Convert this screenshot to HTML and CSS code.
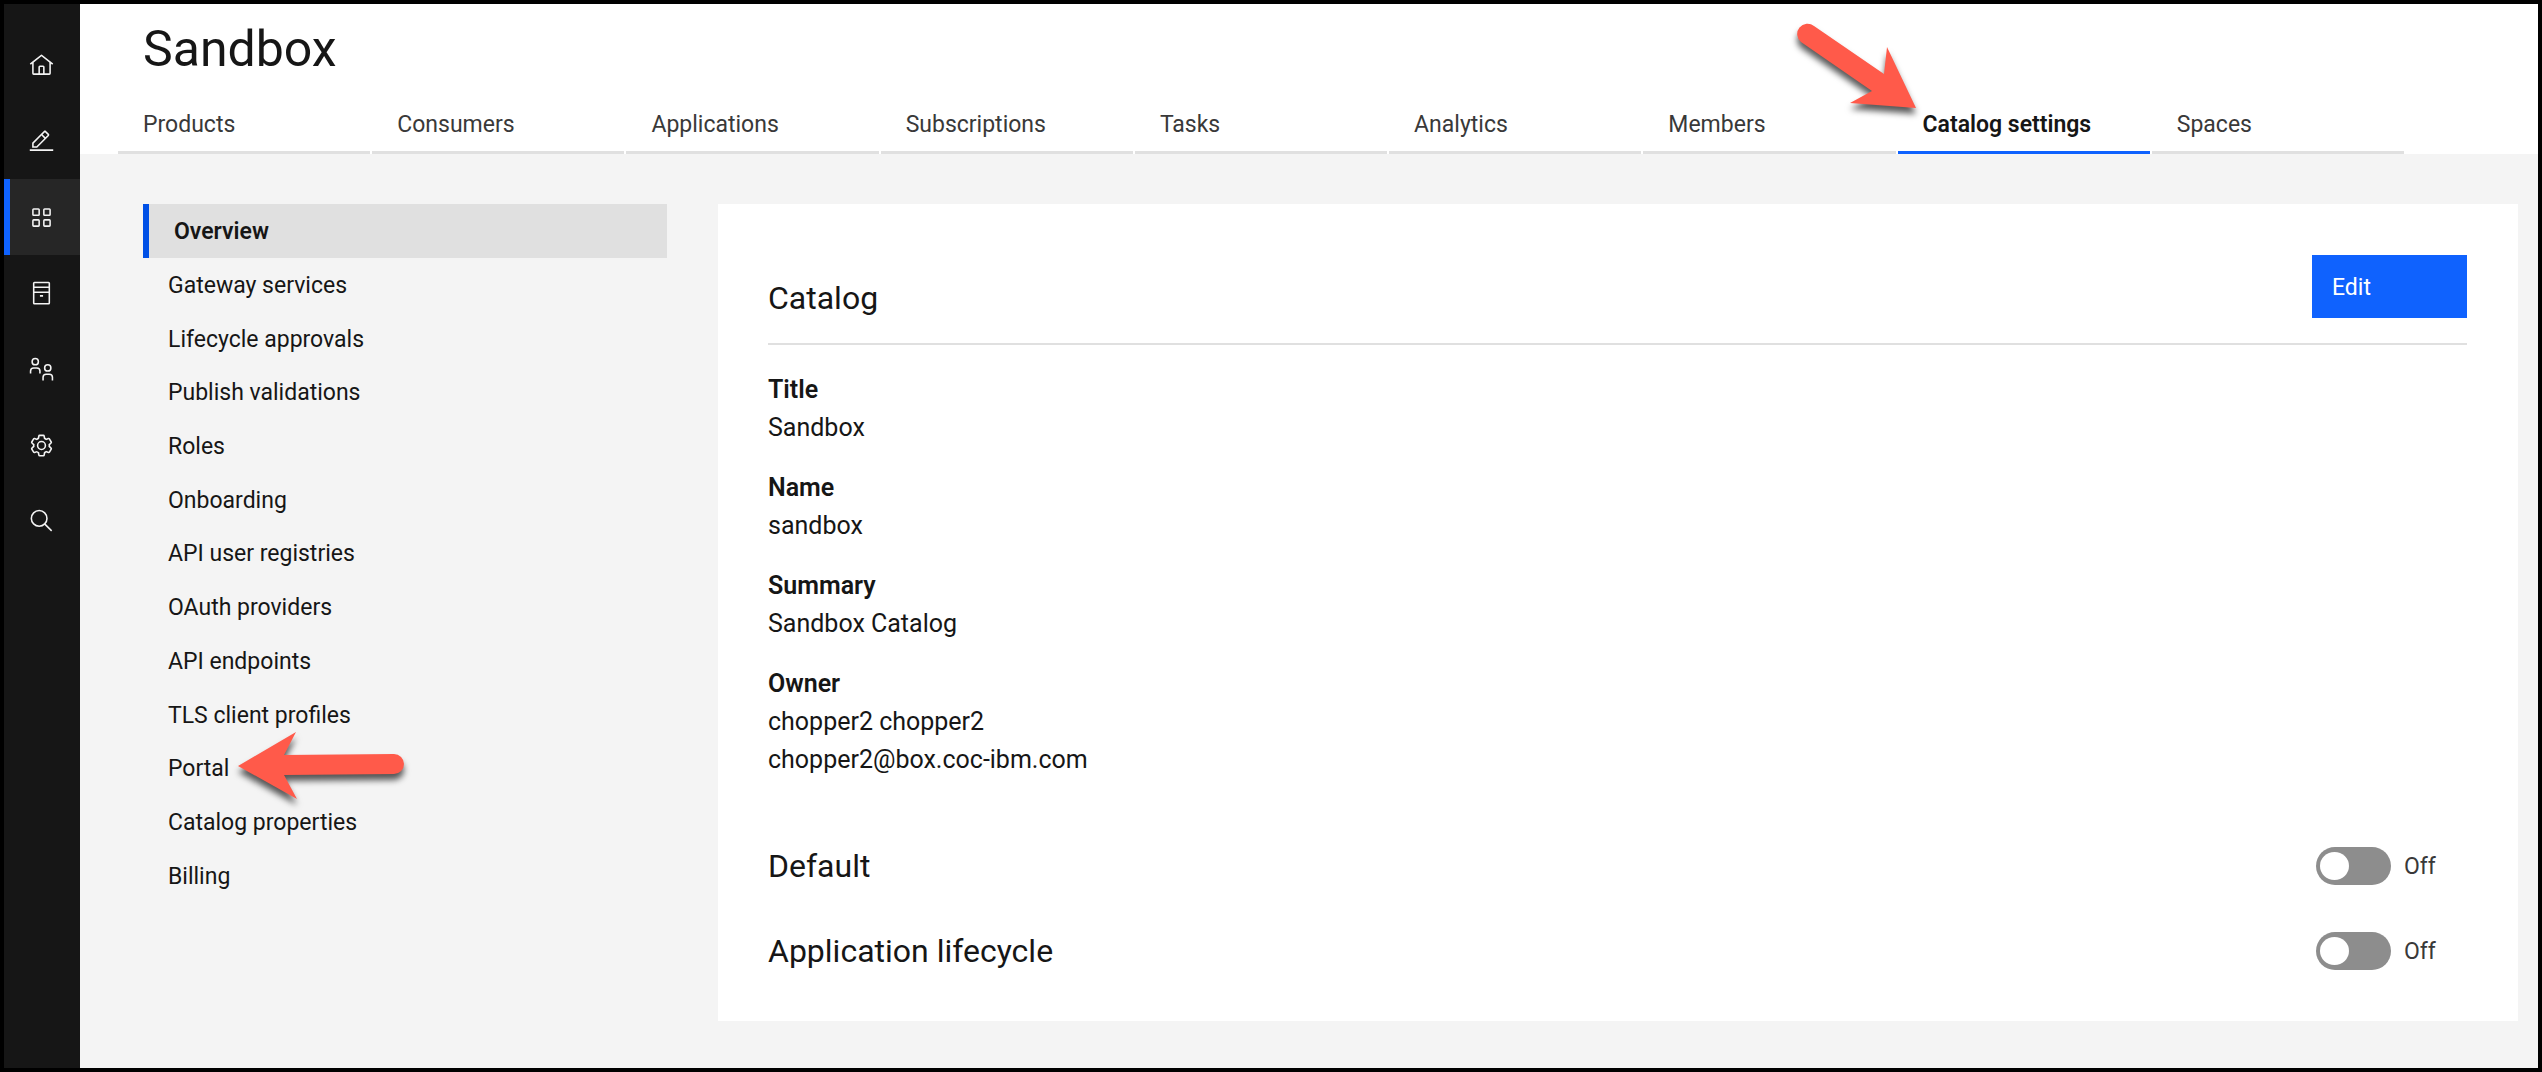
FILE: index.html
```html
<!DOCTYPE html>
<html lang="en">
<head>
<meta charset="utf-8">
<meta name="viewport" content="width=device-width, initial-scale=1">
<title>Sandbox</title>
<link rel="stylesheet" href="styles.css">
</head>
<body>
<div class="app">
  <nav class="rail" aria-label="Main">
    <a class="rail-link" href="#home" aria-label="Home">
      <svg class="icon" viewBox="0 0 32 32"><path d="M16.612 2.214a1.01 1.01 0 0 0-1.243 0L1 13.419l1.243 1.572L4 13.621V26a2 2 0 0 0 2 2h20a2 2 0 0 0 2-2V13.63L29.757 15 31 13.428zM18 26h-4v-8h4zm2 0v-8a2 2 0 0 0-2-2h-4a2 2 0 0 0-2 2v8H6V12.062l10-7.79 10 7.8V26z"/></svg>
    </a>
    <a class="rail-link" href="#develop" aria-label="Develop">
      <svg class="icon" viewBox="0 0 32 32"><path d="M1 26h30v2H1zM25.4 9c.8-.8.8-2 0-2.8l-3.6-3.6c-.8-.8-2-.8-2.8 0l-15 15V24h6.4zM20.4 4 24 7.6l-3 3L17.4 7zM6 22v-3.6l10-10 3.6 3.6-10 10z"/></svg>
    </a>
    <a class="rail-link rail-link-active" href="#manage" aria-label="Manage" aria-current="page">
      <svg class="icon" viewBox="0 0 32 32"><path d="M12 4H6a2 2 0 0 0-2 2v6a2 2 0 0 0 2 2h6a2 2 0 0 0 2-2V6a2 2 0 0 0-2-2zm0 8H6V6h6zM26 4h-6a2 2 0 0 0-2 2v6a2 2 0 0 0 2 2h6a2 2 0 0 0 2-2V6a2 2 0 0 0-2-2zm0 8h-6V6h6zM12 18H6a2 2 0 0 0-2 2v6a2 2 0 0 0 2 2h6a2 2 0 0 0 2-2v-6a2 2 0 0 0-2-2zm0 8H6v-6h6zM26 18h-6a2 2 0 0 0-2 2v6a2 2 0 0 0 2 2h6a2 2 0 0 0 2-2v-6a2 2 0 0 0-2-2zm0 8h-6v-6h6z"/></svg>
    </a>
    <a class="rail-link" href="#resources" aria-label="Resources">
      <svg class="icon icon-line" viewBox="0 0 32 32"><rect x="6" y="2" width="20" height="27" rx="1"/><path d="M6 8h20M6 14.500h20M14 19h4"/></svg>
    </a>
    <a class="rail-link" href="#members" aria-label="Members">
      <svg class="icon icon-line" viewBox="0 0 32 32"><circle cx="8" cy="6" r="4"/><path d="M2 21v-3a4 4 0 0 1 4-4h4a4 4 0 0 1 4 4v3"/><circle cx="24" cy="14" r="4"/><path d="M18 30v-4a4 4 0 0 1 4-4h4a4 4 0 0 1 4 4v4"/></svg>
    </a>
    <a class="rail-link" href="#settings" aria-label="Settings">
      <svg class="icon" viewBox="0 0 32 32"><path fill-rule="evenodd" d="M27 16.760c0-.25 0-.5 0-.76s0-.51 0-.77l1.920-1.680A2 2 0 0 0 29.300 11L26.940 7a2 2 0 0 0-1.730-1 2 2 0 0 0-.64.1l-2.430.82a11.350 11.350 0 0 0-1.310-.75l-.51-2.520a2 2 0 0 0-2-1.610H13.640a2 2 0 0 0-2 1.610l-.51 2.520a11.480 11.480 0 0 0-1.320.75L7.430 6.060A2 2 0 0 0 6.790 6 2 2 0 0 0 5.060 7L2.700 11a2 2 0 0 0 .41 2.510L5 15.240c0 .25 0 .5 0 .76s0 .51 0 .77L3.110 18.450A2 2 0 0 0 2.700 21L5.060 25a2 2 0 0 0 1.730 1 2 2 0 0 0 .64-.1l2.430-.82a11.350 11.350 0 0 0 1.310.75l.51 2.520a2 2 0 0 0 2 1.610h4.720a2 2 0 0 0 2-1.610l.51-2.520a11.480 11.480 0 0 0 1.320-.75l2.420.82a2 2 0 0 0 .64.1 2 2 0 0 0 1.730-1L29.300 21a2 2 0 0 0-.41-2.510zM25.210 24l-3.430-1.160a8.860 8.860 0 0 1-2.710 1.570L18.360 28H13.640l-.71-3.550a9.360 9.360 0 0 1-2.700-1.570L6.790 24 4.430 20l2.720-2.400a8.900 8.900 0 0 1 0-3.130L4.430 12 6.790 8l3.430 1.160a8.860 8.860 0 0 1 2.710-1.570L13.640 4h4.720l.71 3.550a9.360 9.360 0 0 1 2.700 1.570L25.210 8 27.570 12l-2.720 2.400a8.900 8.900 0 0 1 0 3.130L27.570 20z"/><path d="M16 22a6 6 0 1 1 6-6 5.940 5.940 0 0 1-6 6zm0-10a3.910 3.910 0 0 0-4 4 3.910 3.910 0 0 0 4 4 3.910 3.910 0 0 0 4-4 3.910 3.910 0 0 0-4-4z"/></svg>
    </a>
    <a class="rail-link" href="#search" aria-label="Search">
      <svg class="icon icon-line" viewBox="0 0 32 32"><circle cx="13" cy="12" r="10"/><path d="M20 19l9 9"/></svg>
    </a>
  </nav>

  <div class="page">
    <header class="page-header">
      <h1 class="page-title">Sandbox</h1>
      <nav class="tabs" aria-label="Catalog">
        <a class="tab" href="#products">Products</a>
        <a class="tab" href="#consumers">Consumers</a>
        <a class="tab" href="#applications">Applications</a>
        <a class="tab" href="#subscriptions">Subscriptions</a>
        <a class="tab" href="#tasks">Tasks</a>
        <a class="tab" href="#analytics">Analytics</a>
        <a class="tab" href="#catalog-members">Members</a>
        <a class="tab tab-active" href="#catalog-settings" aria-current="page">Catalog settings
          <svg class="arrow arrow-tab" viewBox="0 0 130 100" aria-hidden="true"><path d="M125 89 96 28l-3 27L23 7A10 10 0 0 0 10 23L81 72 59 84z"/></svg>
        </a>
        <a class="tab" href="#spaces">Spaces</a>
      </nav>
    </header>

    <div class="content">
      <nav class="side-nav" aria-label="Catalog settings">
        <a class="side-link side-link-active" href="#overview" aria-current="page">Overview</a>
        <a class="side-link" href="#gateway-services">Gateway services</a>
        <a class="side-link" href="#lifecycle-approvals">Lifecycle approvals</a>
        <a class="side-link" href="#publish-validations">Publish validations</a>
        <a class="side-link" href="#roles">Roles</a>
        <a class="side-link" href="#onboarding">Onboarding</a>
        <a class="side-link" href="#api-user-registries">API user registries</a>
        <a class="side-link" href="#oauth-providers">OAuth providers</a>
        <a class="side-link" href="#api-endpoints">API endpoints</a>
        <a class="side-link" href="#tls-client-profiles">TLS client profiles</a>
        <a class="side-link" href="#portal">Portal
          <svg class="arrow arrow-portal" viewBox="0 0 180 90" aria-hidden="true"><path d="M5 39 63 5 51 28l110-1a10 10 0 0 1 0 20L51 48l13 24z"/></svg>
        </a>
        <a class="side-link" href="#catalog-properties">Catalog properties</a>
        <a class="side-link" href="#billing">Billing</a>
      </nav>

      <main class="panel">
        <div class="panel-header">
          <h2 class="heading">Catalog</h2>
          <button class="button" type="button">Edit</button>
        </div>
        <dl class="fields">
          <div><dt>Title</dt><dd>Sandbox</dd></div>
          <div><dt>Name</dt><dd>sandbox</dd></div>
          <div><dt>Summary</dt><dd>Sandbox Catalog</dd></div>
          <div><dt>Owner</dt><dd>chopper2 chopper2</dd><dd>chopper2@box.coc-ibm.com</dd></div>
        </dl>
        <div class="options">
          <div class="option">
            <label class="heading" for="default">Default</label>
            <div class="switch"><input class="toggle" type="checkbox" role="switch" id="default"><label for="default">Off</label></div>
          </div>
          <div class="option">
            <label class="heading" for="lifecycle">Application lifecycle</label>
            <div class="switch"><input class="toggle" type="checkbox" role="switch" id="lifecycle"><label for="lifecycle">Off</label></div>
          </div>
        </div>
      </main>
    </div>
  </div>
</div>
</body>
</html>
```
FILE: styles.css
```css
* {
  box-sizing: border-box;
}

body {
  margin: 0;
  font-family: Roboto, "Liberation Sans", sans-serif;
  font-size: 23px;
  color: #161616;
  background: #f4f4f4;
}

h1, h2, dl, dd {
  margin: 0;
}

a {
  color: inherit;
  text-decoration: none;
}

.app {
  display: flex;
  min-height: 100vh;
  border: 4px solid #000;
}

/* Icon rail */
.rail {
  flex: none;
  width: 76px;
  padding-top: 23px;
  background: #161616;
}

.rail-link {
  display: flex;
  align-items: center;
  height: 76px;
  padding-left: 25px;
}

.rail-link-active {
  background: #262626;
  box-shadow: inset 6px 0 #0f62fe;
}

.icon {
  width: 25px;
  height: 25px;
  fill: #f4f4f4;
}

.icon-line {
  fill: none;
  stroke: #f4f4f4;
  stroke-width: 2;
}

/* Header and tabs */
.page {
  flex: 1;
  min-width: 0;
}

.page-header {
  padding: 15px 38px 0;
  background: #fff;
}

.page-title {
  padding-left: 25px;
  font-size: 50px;
  font-weight: 400;
  line-height: 60px;
}

.tabs {
  display: grid;
  grid-template-columns: repeat(9, 1fr);
  gap: 2px;
  max-width: 2286px;
  margin-top: 12px;
}

.tab {
  position: relative;
  padding: 19px 0 11px 25px;
  border-bottom: 3px solid #e0e0e0;
  line-height: 30px;
  white-space: nowrap;
  color: #393939;
}

.tab-active {
  border-color: #0f62fe;
  font-weight: 600;
  color: #161616;
}

/* Pointer arrows */
.arrow {
  position: absolute;
  overflow: visible;
  fill: #ff5a4a;
  filter: drop-shadow(0 6px 3px rgb(0 0 0 / 65%));
}

.arrow-tab {
  top: -72px;
  left: -107px;
  width: 130px;
  height: 100px;
}

.arrow-portal {
  top: -14px;
  left: 90px;
  width: 180px;
  height: 90px;
}

/* Content */
.content {
  display: grid;
  grid-template-columns: 131fr 450fr;
  gap: 51px;
  align-items: start;
  padding: 50px 20px 47px 63px;
}

.side-nav {
  display: grid;
  grid-auto-rows: 1fr;
  min-height: 698px;
}

.side-link {
  position: relative;
  display: flex;
  align-items: center;
  padding: 2px 0 0 25px;
}

.side-link-active {
  border-left: 6px solid #0050e6;
  background: #e0e0e0;
  font-weight: 600;
}

.panel {
  padding: 51px 51px 51px 50px;
  background: #fff;
}

.panel-header {
  display: flex;
  align-items: flex-end;
  justify-content: space-between;
  padding-bottom: 25px;
  border-bottom: 2px solid #e0e0e0;
}

.heading {
  font-size: 32px;
  font-weight: 400;
  line-height: 40px;
}

.button {
  width: 155px;
  height: 63px;
  padding: 2px 20px 0;
  border: 0;
  background: #0f62fe;
  font: inherit;
  text-align: left;
  color: #fff;
}

.fields {
  display: grid;
  gap: 22px;
  margin-top: 26px;
  font-size: 25px;
  line-height: 38px;
}

.fields dt {
  font-weight: 600;
}

.options {
  display: grid;
  gap: 47px;
  margin-top: 68px;
}

.option {
  display: flex;
  align-items: center;
  justify-content: space-between;
  height: 38px;
}

.switch {
  display: flex;
  align-items: center;
  gap: 13px;
  width: 151px;
  color: #393939;
}

.toggle {
  appearance: none;
  display: flex;
  align-items: center;
  width: 75px;
  height: 38px;
  margin: 0;
  padding: 0 4px;
  border-radius: 19px;
  background: #8d8d8d;
}

.toggle::before {
  content: "";
  width: 29px;
  height: 28px;
  border-radius: 50%;
  background: #fff;
}

.toggle:checked {
  justify-content: flex-end;
  background: #24a148;
}
```
